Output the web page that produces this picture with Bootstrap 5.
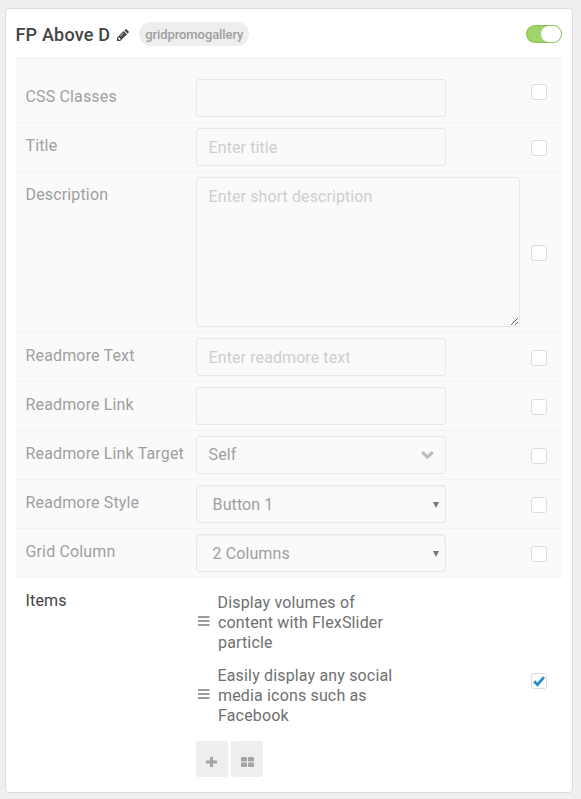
<!DOCTYPE html>
<html lang="en">
<head>
<meta charset="utf-8">
<meta name="viewport" content="width=device-width, initial-scale=1">
<title>Particle settings</title>
<link href="https://cdn.jsdelivr.net/npm/bootstrap@5.3.0/dist/css/bootstrap.min.css" rel="stylesheet">
<style>
body{background:#efefef;font-family:Roboto,"Noto Sans",sans-serif;font-size:16px;line-height:20px;color:#444;overflow:hidden}
.panel{margin:8px 8px 0 5px;height:785px;padding:0 10px;border:1px solid #ddd;border-radius:4px;background:#fff}
.panel-head{height:50px;border-bottom:1px solid #eee}
.panel-title{font-size:18px;line-height:24px;font-weight:500;color:#444;letter-spacing:.2px;padding-top:2px;text-indent:-.5px}
.pencil{margin:3px 10px 0 7px}
.tag{font-size:13px;line-height:25px;height:24px;font-weight:500;color:#9f9f9f;background:#eee;border-radius:12px;padding:0 6px;letter-spacing:-.08px}
.switch{width:36px;height:18px;border-radius:9px;background:#9fd569;padding:1px;box-shadow:inset 0 0 1px 1px rgba(70,110,30,.22)}
.knob{width:20px;height:16px;border-radius:8px;background:#fff}
.setting{background:#fafafa;border-bottom:1px solid #f3f3f3;padding:5px 15px 5px 10px}
.setting.first{padding-top:20px}
.first .form-check-input{margin-top:5px}
.name{width:170px;color:#9f9f9f;padding-top:8px;letter-spacing:.15px;text-indent:-.5px}
.setting .form-control{width:250px;height:38px;border:1px solid #e8e8e8;border-radius:3px;background:#fafafa;padding:0 12px;color:#9f9f9f;line-height:20px;letter-spacing:.09px;text-indent:-.4px}
.setting .form-control::placeholder{color:#cecece;opacity:1}
.setting textarea.form-control{width:324px;height:150px;padding-top:9px;resize:both}
.setting .form-control.native{padding:1px 5px 0 16px;box-shadow:inset 0 1px 2px rgba(0,0,0,.06)}
.setting .form-check-input{width:16px;height:16px;border:1px solid #ddd;border-radius:3px;background:#fff}
.setting .form-check-input.align-self-center{margin-top:1px}
.setting .form-check-input:checked{background:#fff url("data:image/svg+xml,%3Csvg xmlns='http://www.w3.org/2000/svg' viewBox='0 0 14 14'%3E%3Cpath d='M2.2 7.2 5.5 10.7 12 3.2' fill='none' stroke='%23228fc8' stroke-width='2.7'/%3E%3C/svg%3E") center/14px no-repeat}
.setting.active{background:#fff;border:0;height:205px}
.active .name{color:#444}
.entry{width:204px;color:#6f6f6f;gap:8px;margin-bottom:13px;letter-spacing:.16px;text-indent:-.5px}
.entry svg{margin-top:-4px}
.entries{padding:10px 0 0 2px}
.tool{width:32px;height:36px;border-radius:3px;background:#eee;padding:5px 0 0;border:0}
.tools{gap:3px;margin-top:15px}
</style>
<script src="https://cdn.jsdelivr.net/npm/bootstrap@5.3.0/dist/js/bootstrap.bundle.min.js"></script>
</head>
<body>
<main class="panel">
  <header class="panel-head d-flex align-items-center">
    <h1 class="panel-title mb-0">FP Above D</h1>
    <svg class="pencil" width="12" height="12" viewBox="0 0 12 12"><path fill="#444" fill-rule="evenodd" d="M0 12V8.8L6.7 2.1 9.9 5.3 3.2 12ZM1 9.2V10h1v1h.9l.8-.8-1.9-1.9ZM6.4 3.9 3.2 7.1l.4.4 3.2-3.2ZM7.4 1.4 8.5.3Q9 0 9.5.3L11.7 2.5Q12 3 11.7 3.5L10.6 4.6Z"/></svg>
    <span class="tag">gridpromogallery</span>
    <div class="switch d-flex justify-content-end ms-auto"><div class="knob"></div></div>
  </header>
  <div class="setting first d-flex">
    <div class="name">CSS Classes</div>
    <input class="form-control" type="text" aria-label="CSS Classes">
    <input class="form-check-input ms-auto" type="checkbox" aria-label="Override CSS Classes">
  </div>
  <div class="setting d-flex">
    <div class="name">Title</div>
    <input class="form-control" type="text" placeholder="Enter title">
    <input class="form-check-input ms-auto align-self-center" type="checkbox" aria-label="Override Title">
  </div>
  <div class="setting d-flex">
    <div class="name">Description</div>
    <textarea class="form-control" placeholder="Enter short description"></textarea>
    <input class="form-check-input ms-auto align-self-center" type="checkbox" aria-label="Override Description">
  </div>
  <div class="setting d-flex">
    <div class="name">Readmore Text</div>
    <input class="form-control" type="text" placeholder="Enter readmore text">
    <input class="form-check-input ms-auto align-self-center" type="checkbox" aria-label="Override Text">
  </div>
  <div class="setting d-flex">
    <div class="name">Readmore Link</div>
    <input class="form-control" type="text" aria-label="Readmore Link">
    <input class="form-check-input ms-auto align-self-center" type="checkbox" aria-label="Override Link">
  </div>
  <div class="setting d-flex">
    <div class="name text-nowrap">Readmore Link Target</div>
    <div class="form-control d-flex align-items-center justify-content-between">Self
      <svg width="12" height="8" viewBox="0 0 12 8" overflow="visible"><path d="M1.2 1.1 6.5 6.1l5.3-5" fill="none" stroke="#bbb" stroke-width="3"/></svg></div>
    <input class="form-check-input ms-auto align-self-center" type="checkbox" aria-label="Override Target">
  </div>
  <div class="setting d-flex">
    <div class="name">Readmore Style</div>
    <div class="form-control native d-flex align-items-center justify-content-between">Button 1
      <svg width="8" height="6" viewBox="0 0 8 6"><path d="M1 0h6L4 6Z" fill="#777"/></svg></div>
    <input class="form-check-input ms-auto align-self-center" type="checkbox" aria-label="Override Style">
  </div>
  <div class="setting d-flex">
    <div class="name">Grid Column</div>
    <div class="form-control native d-flex align-items-center justify-content-between">2 Columns
      <svg width="8" height="6" viewBox="0 0 8 6"><path d="M1 0h6L4 6Z" fill="#777"/></svg></div>
    <input class="form-check-input ms-auto align-self-center" type="checkbox" aria-label="Override Column">
  </div>
  <div class="setting active d-flex">
    <div class="name">Items</div>
    <div>
      <div class="entries">
        <div class="entry d-flex align-items-center">
          <svg class="flex-shrink-0" width="12" height="10" viewBox="0 0 12 10"><path d="M0 0h11.5v2H0ZM0 4h11.5v2H0ZM0 8h11.5v2H0Z" fill="#9b9b9b"/></svg>
          <span>Display volumes of<br>content with FlexSlider<br>particle</span></div>
        <div class="entry d-flex align-items-center">
          <svg class="flex-shrink-0" width="12" height="10" viewBox="0 0 12 10"><path d="M0 0h11.5v2H0ZM0 4h11.5v2H0ZM0 8h11.5v2H0Z" fill="#9b9b9b"/></svg>
          <span>Easily display any social<br>media icons such as<br>Facebook</span></div>
      </div>
      <div class="tools d-flex">
        <button class="tool d-flex align-items-center justify-content-center" aria-label="Add"><svg width="12" height="10" viewBox="0 0 12 10"><path d="M4 0h3v3.5h4v3H7V10H4V6.5H0v-3h4Z" fill="#a5a5a5"/></svg></button>
        <button class="tool d-flex align-items-center justify-content-center" aria-label="Grid"><svg width="13" height="10" viewBox="0 0 13 10"><g fill="#a5a5a5"><rect width="6" height="4.5" rx=".7"/><rect x="7" width="6" height="4.5" rx=".7"/><rect y="5.5" width="6" height="4.5" rx=".7"/><rect x="7" y="5.5" width="6" height="4.5" rx=".7"/></g></svg></button>
      </div>
    </div>
    <input class="form-check-input ms-auto align-self-center" type="checkbox" checked aria-label="Override Items">
  </div>
</main>
</body>
</html>
